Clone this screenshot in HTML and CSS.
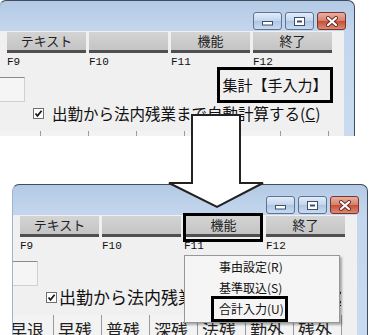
FILE: index.html
```html
<!DOCTYPE html>
<html lang="ja">
<head>
<meta charset="utf-8">
<link rel="stylesheet" href="styles.css">
</head>
<body>
<div class="stage">
  <div class="win win1">
    <div class="titlebar">
      <span class="cap min"><svg width="11" height="5" viewBox="0 0 11 5"><rect x="0.5" y="0.5" width="10" height="3.5" fill="#fff" stroke="#3b4f6a"/></svg></span>
      <span class="cap max"><svg width="11" height="9" viewBox="0 0 11 9"><rect x="0.5" y="0.5" width="10" height="8" fill="#fff" stroke="#3b4f6a"/><rect x="3" y="3.5" width="5" height="2" fill="#3b4f6a"/></svg></span>
      <span class="cap close"><svg width="14" height="11" viewBox="0 0 14 11"><path d="M3 2 L11 9 M11 2 L3 9" stroke="#6b2a22" stroke-width="4" stroke-linecap="round"/><path d="M3 2 L11 9 M11 2 L3 9" stroke="#fff" stroke-width="2.2" stroke-linecap="round"/></svg></span>
    </div>
    <div class="client">
      <div class="toolbar">
        <div class="fkey"><div class="btn">テキスト</div><div class="flabel">F9</div></div>
        <div class="fkey"><div class="btn"></div><div class="flabel">F10</div></div>
        <div class="fkey"><div class="btn">機能</div><div class="flabel">F11</div></div>
        <div class="fkey"><div class="btn">終了</div><div class="flabel">F12</div></div>
      </div>
      <div class="midrow"><div class="leftbox"></div></div>
      <div class="chk">
        <svg class="cb" width="11" height="11" viewBox="0 0 11 11"><rect x="0.5" y="0.5" width="10" height="10" fill="#fff" stroke="#6f6f6f"/><path d="M2.5 5.5 L4.5 7.8 L8.6 2.8" fill="none" stroke="#1a1a1a" stroke-width="1.8"/></svg>
        <span class="chk-text t1">出勤から法内残業まで自動計算する(<u>C</u>)</span>
      </div>
      <div class="headers">
        <span>早退</span><span>早残</span><span>普残</span><span>深残</span><span>法残</span><span>勤外</span><span>残外</span>
      </div>
    </div>
  </div>

  <div class="win win2">
    <div class="titlebar">
      <span class="cap min"><svg width="11" height="5" viewBox="0 0 11 5"><rect x="0.5" y="0.5" width="10" height="3.5" fill="#fff" stroke="#3b4f6a"/></svg></span>
      <span class="cap max"><svg width="11" height="9" viewBox="0 0 11 9"><rect x="0.5" y="0.5" width="10" height="8" fill="#fff" stroke="#3b4f6a"/><rect x="3" y="3.5" width="5" height="2" fill="#3b4f6a"/></svg></span>
      <span class="cap close"><svg width="14" height="11" viewBox="0 0 14 11"><path d="M3 2 L11 9 M11 2 L3 9" stroke="#6b2a22" stroke-width="4" stroke-linecap="round"/><path d="M3 2 L11 9 M11 2 L3 9" stroke="#fff" stroke-width="2.2" stroke-linecap="round"/></svg></span>
    </div>
    <div class="client">
      <div class="toolbar">
        <div class="fkey"><div class="btn">テキスト</div><div class="flabel">F9</div></div>
        <div class="fkey"><div class="btn"></div><div class="flabel">F10</div></div>
        <div class="fkey"><div class="btn">機能</div><div class="flabel">F11</div></div>
        <div class="fkey"><div class="btn">終了</div><div class="flabel">F12</div></div>
      </div>
      <div class="midrow"><div class="leftbox"></div></div>
      <div class="chk chk2">
        <svg class="cb" width="11" height="11" viewBox="0 0 11 11"><rect x="0.5" y="0.5" width="10" height="10" fill="#fff" stroke="#6f6f6f"/><path d="M2.5 5.5 L4.5 7.8 L8.6 2.8" fill="none" stroke="#1a1a1a" stroke-width="1.8"/></svg>
        <span class="chk-text t2">出勤から法内残業まで自動計算する(<u>C</u>)</span>
      </div>
      <div class="headers">
        <span>早退</span><span>早残</span><span>普残</span><span>深残</span><span>法残</span><span>勤外</span><span>残外</span>
      </div>
    </div>
  </div>

  <svg class="arrow" width="373" height="335" viewBox="0 0 373 335">
    <polygon points="192,115 240,115 240,183 263,183 217,207 169,183 192,183" fill="#fff" stroke="#222" stroke-width="2" stroke-linejoin="miter"/>
  </svg>

  <div class="mark mark-total">集計【手入力】</div>
  <div class="mark mark-func"></div>

  <div class="menu">
    <div class="menu-item">事由設定(R)</div>
    <div class="menu-item">基準取込(S)</div>
    <div class="menu-item">合計入力(U)</div>
  </div>
  <div class="mark mark-sum"></div>
</div>
</body>
</html>
```

FILE: styles.css
```css
html, body {
  margin: 0;
  padding: 0;
  background: #fff;
  overflow: hidden;
}

.stage {
  position: relative;
  width: 373px;
  height: 335px;
  overflow: hidden;
  font-family: "Noto Sans CJK JP", "Noto Sans", sans-serif;
  color: #1a1a1a;
}

.win {
  width: 356px;
  box-sizing: border-box;
  border: 1px solid #3e4c5e;
  border-left-color: #9fb4cf;
  border-bottom: none;
  border-radius: 7px 7px 0 0;
  background: linear-gradient(180deg, #b3c9e4 0, #c3d6ed 28px, #c9dbf0 100%);
  overflow: hidden;
}

.win1 {
  margin-left: -1px;
  height: 136px;
}

.win2 {
  margin-left: 12px;
  margin-top: 48px;
  height: 151px;
}

.titlebar {
  height: 30px;
  box-sizing: border-box;
  display: flex;
  justify-content: flex-end;
  align-items: flex-start;
  gap: 3px;
  padding: 11px 8px 0 0;
}

.cap {
  width: 29px;
  height: 18px;
  box-sizing: border-box;
  border: 1px solid #5d7496;
  border-radius: 3px;
  display: flex;
  align-items: center;
  justify-content: center;
  background: linear-gradient(180deg, #e3edf8 0, #c3d5ec 48%, #aec5e2 52%, #c8daf0 100%);
}

.cap.min {
  align-items: flex-end;
  padding-bottom: 3px;
}

.cap.close {
  border-color: #7b3429;
  background: linear-gradient(180deg, #eab0a2 0, #d7806d 48%, #c5503a 52%, #dc8a72 100%);
}

.client {
  margin-right: 10px;
  height: 200px;
  background: #f0f0f0;
  padding-top: 1px;
  box-sizing: border-box;
}

.toolbar {
  display: flex;
  gap: 3px;
  padding-left: 7px;
  height: 37px;
}

.fkey {
  width: 79px;
  display: flex;
  flex-direction: column;
}

.btn {
  height: 21px;
  flex: none;
  box-sizing: border-box;
  background: linear-gradient(180deg, #d4d4d4 0, #c4c4c4 100%);
  border-bottom: 3px solid #4f4f4f;
  font-size: 13px;
  line-height: 18px;
  text-align: center;
  color: #222;
  overflow: hidden;
}

.flabel {
  margin-top: 3px;
  height: 13px;
  font-family: "Liberation Mono", monospace;
  font-size: 11px;
  line-height: 13px;
  color: #111;
}

.midrow {
  margin-top: 8px;
  height: 25px;
}

.leftbox {
  width: 25px;
  height: 25px;
  box-sizing: border-box;
  border: 1px solid #d0d0d0;
  border-top-color: #8c8c8c;
  border-left: none;
  background: #f5f5f5;
}

.chk {
  margin-top: 1px;
  height: 20px;
  display: flex;
  align-items: center;
  padding-left: 33px;
  overflow: hidden;
}

.cb {
  flex: none;
  margin-right: 8px;
}

.chk2 .cb {
  margin-right: 2px;
}

.chk-text {
  white-space: nowrap;
  color: #111;
  line-height: 20px;
}

.chk-text.t1 {
  font-size: 15.5px;
}

.chk-text.t2 {
  font-size: 17px;
  display: inline-block;
  width: 282px;
  overflow: hidden;
}

.headers {
  margin-top: 8px;
  margin-left: -7px;
  display: flex;
  height: 30px;
}

.headers span {
  flex: none;
  width: 48px;
  box-sizing: border-box;
  border-right: 1px solid #9a9a9a;
  padding: 5px 0 0 4px;
  font-size: 17px;
  line-height: 20px;
  color: #222;
  background: #f3f3f3;
}

.arrow {
  position: absolute;
  left: 0;
  top: 0;
}

.mark {
  position: absolute;
  box-sizing: border-box;
  border: 3px solid #000;
}

.mark-total {
  left: 217px;
  top: 67px;
  width: 116px;
  height: 36px;
  font-size: 15px;
  line-height: 30px;
  text-align: center;
  color: #111;
  background: #f0f0f0;
}

.mark-func {
  left: 183px;
  top: 213px;
  width: 80px;
  height: 29px;
}

.menu {
  position: absolute;
  left: 184px;
  top: 255px;
  width: 156px;
  height: 68px;
  box-sizing: border-box;
  border: 1px solid #979797;
  background: #f5f5f5;
  box-shadow: 2px 2px 2px rgba(0, 0, 0, 0.3);
}

.menu-item {
  height: 21px;
  line-height: 21px;
  padding-left: 34px;
  font-size: 12px;
  color: #111;
  white-space: nowrap;
}

.mark-sum {
  left: 211px;
  top: 296px;
  width: 77px;
  height: 26px;
}
```
